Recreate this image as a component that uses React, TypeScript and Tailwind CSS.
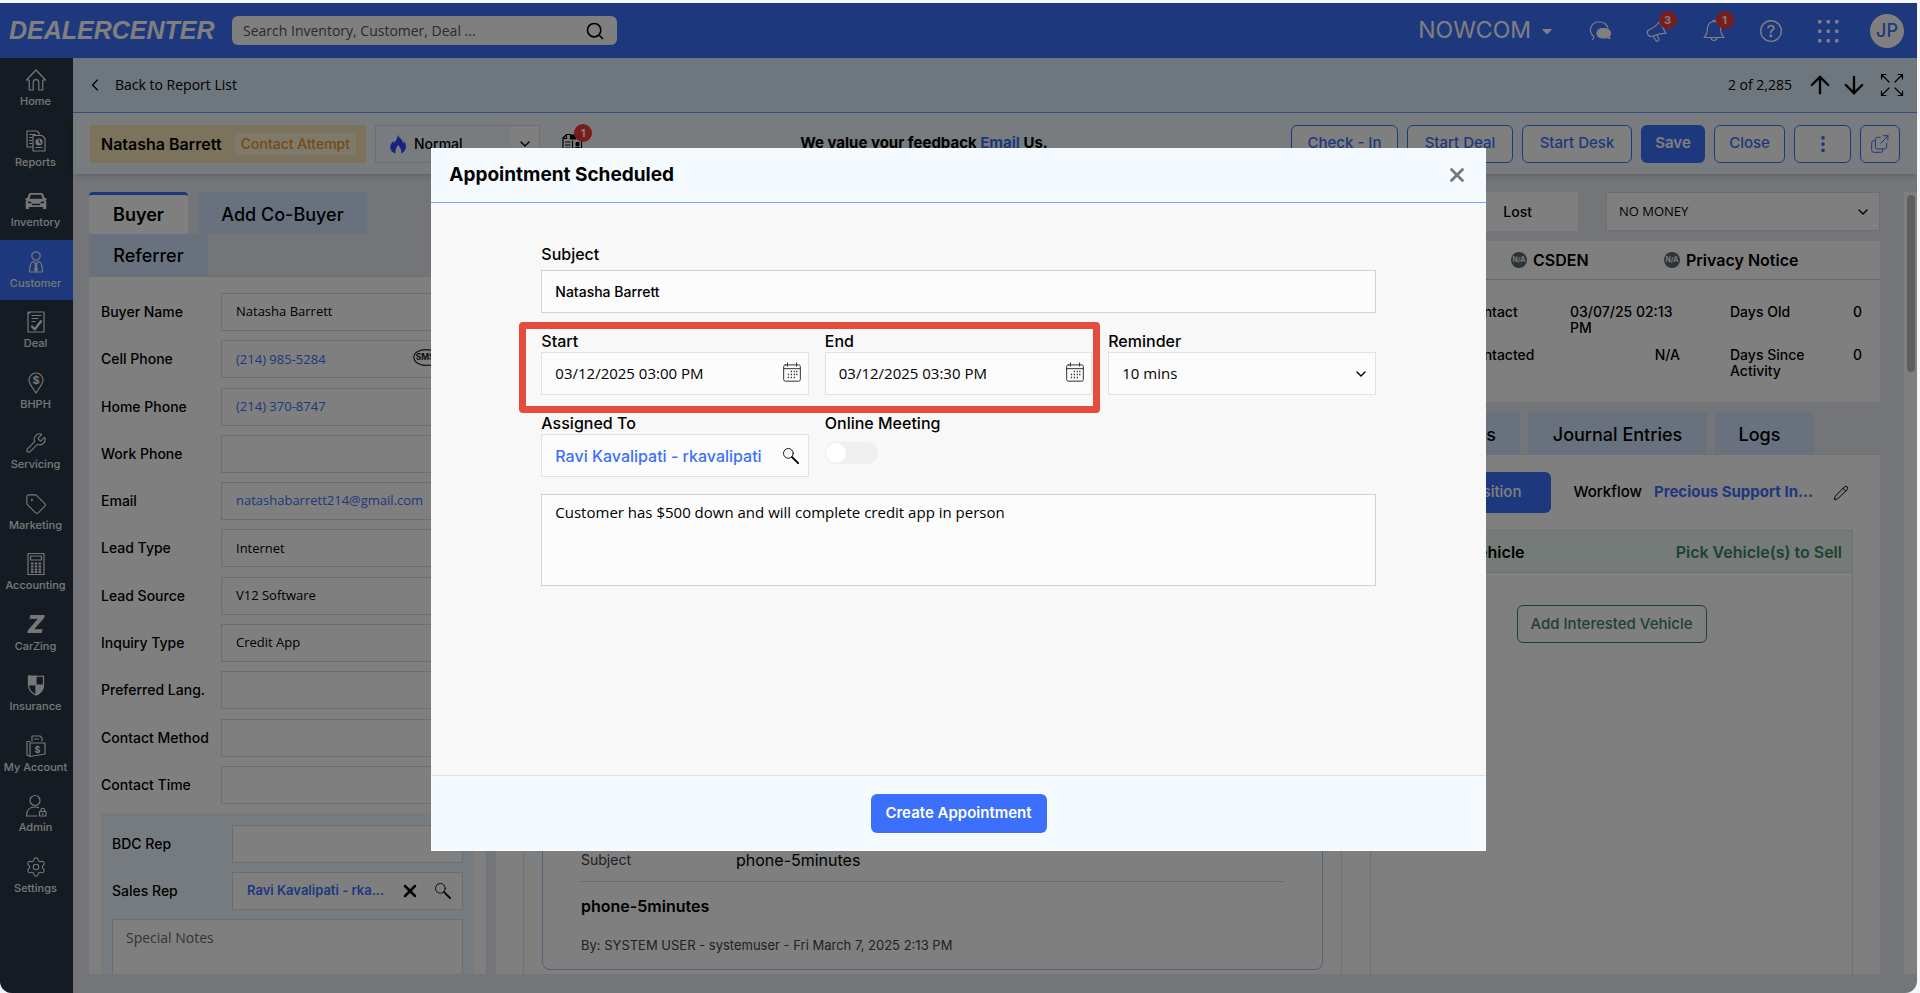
import { ReactNode } from 'react';
import { ArrowDown, ArrowUp, ChevronDown, ChevronLeft, Pencil, Search, Settings, Tag, Wrench, X } from 'lucide-react';
import { BsQuestionCircle, BsThreeDotsVertical } from 'react-icons/bs';
import { FaCaretDown } from 'react-icons/fa';

const Svg = ({ children, className = 'w-6 h-6' }: { children: ReactNode; className?: string }) => (
  <svg viewBox="0 0 24 24" fill="none" stroke="currentColor" strokeWidth="1.2" strokeLinejoin="round" strokeLinecap="round" className={className} aria-hidden="true">
    {children}
  </svg>
);

const HomeIcon = () => (
  <Svg><path d="M2.500 12 12 2l9.500 10H18.800v10h-4v-7.500a2.800 2.800 0 0 0-5.600 0V22h-4V12z" /></Svg>
);

const ReportsIcon = () => (
  <Svg>
    <path d="M9 18H3V2h10l2 2v1.500M5.500 5.500h6M5.500 8.500h2.500M5.500 11.500h2.500M5.500 14.500h2.500" />
    <path d="M9 6.500h9l3 3V22H9zM12 18.500h6" />
    <circle cx="15" cy="13" r="3" fill="currentColor" />
    <path d="M15 10.500V13l1.500 1" stroke="#2a3646" />
  </Svg>
);

const CarIcon = () => (
  <Svg>
    <path fill="currentColor" stroke="none" fillRule="evenodd" d="M6.500 4h11c.8 0 1.300.4 1.600 1.100L20.600 9h1.900v1.700h-1.100c.6.600.9 1.300.9 2.100V20h-3.300v-2H5v2H1.700v-7.200c0-.8.300-1.500.9-2.100H1.500V9h1.900l1.500-3.900C5.200 4.400 5.700 4 6.500 4Zm.4 1.800L5.500 9.800h13l-1.400-4ZM4 12.200v1.800l3.500.500v-1.300Zm16 0-3.500 1v1.300l3.500-.5ZM8 14.800v1.400h8v-1.400Z" />
  </Svg>
);

const CustomerIcon = () => (
  <Svg>
    <circle cx="12" cy="6" r="4.200" />
    <path d="M9.500 11.500c-3 1-4 4.500-4 10.500h13c0-6-1-9.500-4-10.500L12 14z" />
    <path d="m12 13.500-1 1.500.6 1-1 4 1.400 1.500 1.400-1.500-1-4 .6-1z" fill="currentColor" />
  </Svg>
);

const DealIcon = () => (
  <Svg>
    <path d="M4 4V22h16V2H6.500zM6.500 2H4v2M8 5.500h9M8 8.500h6M8 11.500h3" />
    <path d="m8 16.500 2.800 2.800 6.200-8" strokeWidth="2.400" />
  </Svg>
);

const BhphIcon = () => (
  <Svg>
    <path d="M12 22c-3-5-7-9-7-13a7 7 0 0 1 14 0c0 4-4 8-7 13z" />
    <text x="12" y="13" textAnchor="middle" fontSize="11" fontWeight="700" fill="currentColor" stroke="none" fontFamily="Inter, sans-serif">$</text>
  </Svg>
);

const CalculatorIcon = () => (
  <Svg>
    <path d="M4 1.500h16v21H4zM6.500 4h11v4h-11z" />
    <path d="M7 11.500h2.500M10.800 11.500h2.500M14.600 11.500h2.500M7 14.500h2.500M10.800 14.500h2.500M14.600 14.500h2.500M7 17.500h2.500M10.800 17.500h2.500M14.600 17.500h2.500M7 20h2.500M10.800 20h2.500M14.600 20h2.500" strokeWidth="1.800" strokeLinecap="butt" />
  </Svg>
);

const CarZingIcon = () => (
  <span className="font-['Inter',sans-serif] text-2xl leading-6 font-black italic">Z</span>
);

const InsuranceIcon = () => (
  <Svg>
    <path d="M4.500 3c5 .5 10 .5 15 0v9c0 5-3 8-7.500 10-4.500-2-7.500-5-7.500-10z" />
    <path d="M4.500 3c2.500.3 5 .4 7.500.4V12H4.500zM12 12h7.500c0 5-3 8-7.500 10z" fill="currentColor" />
  </Svg>
);

const AccountIcon = () => (
  <Svg>
    <path d="M8 7V2h8l2 2v3M10.500 5h4M6 7.500H3V21l3 1.500M6 9h15v11L6 22.500z" />
    <text x="13.500" y="19" textAnchor="middle" fontSize="9" fontWeight="700" fill="currentColor" stroke="none" fontFamily="Inter, sans-serif">$</text>
  </Svg>
);

const AdminIcon = () => (
  <Svg>
    <circle cx="11" cy="6.500" r="5" />
    <path d="M13 22H2.500c0-6 3-9 8.500-9 1.500 0 2.500.2 3.500.6" />
    <path d="M15.500 17.500H22V22h-6.500zM17 17.500V16a1.700 1.700 0 0 1 3.500 0v1.500M18.700 19.300v1" />
  </Svg>
);

const ChatIcon = () => (
  <Svg>
    <path d="M4.500 20.500c1.300-1 1.500-2 1-3.300A8 8 0 0 1 11 3a9 9 0 0 1 9 6" />
    <path d="M15.500 9.500c4 0 7 2 7 4.700 0 1.300-.5 2.300-1.500 3.100l1 2.200-3.200-1c-1 .4-2 .5-3.300.5-4 0-6.500-2-6.500-4.800s2.500-4.700 6.500-4.700z" fill="currentColor" />
  </Svg>
);

const MegaphoneIcon = () => (
  <Svg>
    <path d="M2.500 14.500c-.7-1.500 0-2.800 1.200-3.500C8 9 12 6.500 14.500 2.500l6.500 12c-4.500-.3-9 .8-13 2.500-2.500 1-4.700.2-5.500-2.500zM8 17l3 4.800c.8 1 3.500-.2 3-1.500l-2-4.300" />
  </Svg>
);

const BellIcon = () => (
  <Svg>
    <path d="M12 2.500a6.500 6.500 0 0 1 6.500 6.500c0 5.500 1.500 7.500 3.500 9.500H2c2-2 3.500-4 3.500-9.500A6.500 6.500 0 0 1 12 2.500zM9 18.500c0 4 6 4 6 0M10.500 2.500c0-2 3-2 3 0" />
  </Svg>
);

const GridIcon = () => (
  <svg viewBox="0 0 24 24" fill="currentColor" className="w-6 h-6" aria-hidden="true">
    {[2, 10.500, 19].map((x) => [1, 10.500, 20].map((y) => <rect key={`${x}-${y}`} x={x} y={y} width="3.500" height="3.500" rx="1" />))}
  </svg>
);

const ExpandIcon = () => (
  <Svg><path d="M9 9 1.500 1.500M1.500 6V1.500H6M15 9l7.500-7.500M18 1.500h4.500V6M9 15l-7.500 7.500M1.500 18v4.500H6M15 15l7.500 7.500M18 22.500h4.500V18" /></Svg>
);

const PopOutIcon = () => (
  <Svg className="w-5 h-5">
    <path d="M6 8H4.500A2.500 2.500 0 0 0 2 10.500v9A2.500 2.500 0 0 0 4.500 22H13a2.500 2.500 0 0 0 2.500-2.500V18" />
    <path d="M12.500 4H9a2.500 2.500 0 0 0-2.500 2.500v9A2.500 2.500 0 0 0 9 18h8.500a2.500 2.500 0 0 0 2.500-2.500V11M13 11l8.500-9M16 2h5.500v5.500" />
  </Svg>
);

const FlameIcon = () => (
  <svg viewBox="0 0 20 24" className="w-4 h-5" aria-hidden="true">
    <path fill="#3346ff" fillRule="evenodd" d="M10 0c.5 4 6 6 6.500 11 .8-.8 1-2 .8-3 2 3 3 6 2.400 9-.6 3-3 6-6.500 7 1.300-2 1.500-4-.2-6.500-1-1.500-2-2.500-1.900-4.500-3 2-5 6-4.100 11C3 22.500.3 20 .3 16c0-3.500 2-5.500 3.700-8 .5 1 .4 2 .2 3C7.500 8 9.500 5 10 0Z" />
  </svg>
);

const ClipboardIcon = () => (
  <Svg>
    <path d="M3 22V6l3.500-3.500H10M6.500 3v3.500H3M5.500 10H10M5.500 13H10M5.500 16H10M5.500 19H10M17 4h4.500v18H12.500V9" />
    <path d="M10.500 3h5v4h-5z" fill="currentColor" />
    <circle cx="17.500" cy="12" r="1.600" fill="currentColor" />
    <path d="M14.500 18c0-4 6-4 6 0z" fill="currentColor" />
  </Svg>
);

const SmsIcon = () => (
  <svg viewBox="0 0 30 24" fill="none" stroke="#222" strokeWidth="1.200" className="w-7 h-6 shrink-0" aria-hidden="true">
    <path d="M20 18.500c-9 1.500-18-2-18-8.500C2 5 7.500 2 15 2s13 3 13 8c0 3-2 5.500-5 7l2 4z" />
    <text x="14" y="13" textAnchor="middle" fontSize="9" fontWeight="700" fill="#222" stroke="none" fontFamily="Inter, sans-serif">SMS</text>
  </svg>
);

const LoupeIcon = () => (
  <Svg className="w-[18px] h-[18px]">
    <circle cx="8.500" cy="8.500" r="6.500" />
    <path d="m13.500 13.500 8 8" strokeWidth="2.600" />
  </Svg>
);

const CalendarIcon = () => (
  <Svg className="w-5 h-5">
    <path d="M4 3.500h16a2 2 0 0 1 2 2V21a2 2 0 0 1-2 2H4a2 2 0 0 1-2-2V5.500a2 2 0 0 1 2-2zM2 8h20M6.500 1v4M17.500 1v4" />
    <path d="M10.500 11.500h1.500M14 11.500h1.500M17 11.500h1.500M7 15h1.500M10.500 15h1.500M14 15h1.500M17 15h1.500M7 18.500h1.500M10.500 18.500h1.500M14 18.500h1.500" strokeWidth="1.800" strokeLinecap="butt" />
  </Svg>
);

const navItems = [
  { label: 'Home', icon: <HomeIcon /> },
  { label: 'Reports', icon: <ReportsIcon /> },
  { label: 'Inventory', icon: <CarIcon /> },
  { label: 'Customer', icon: <CustomerIcon />, active: true },
  { label: 'Deal', icon: <DealIcon /> },
  { label: 'BHPH', icon: <BhphIcon /> },
  { label: 'Servicing', icon: <Wrench className="w-[22px] h-[22px]" strokeWidth={1.2} /> },
  { label: 'Marketing', icon: <Tag className="w-[22px] h-[22px]" strokeWidth={1.2} /> },
  { label: 'Accounting', icon: <CalculatorIcon /> },
  { label: 'CarZing', icon: <CarZingIcon /> },
  { label: 'Insurance', icon: <InsuranceIcon /> },
  { label: 'My Account', icon: <AccountIcon /> },
  { label: 'Admin', icon: <AdminIcon /> },
  { label: 'Settings', icon: <Settings className="w-[22px] h-[22px]" strokeWidth={1.2} /> }
];

const buyerFields = [
  { id: 'buyer-name', label: 'Buyer Name', value: 'Natasha Barrett' },
  { id: 'cell-phone', label: 'Cell Phone', value: '(214) 985-5284', link: true, sms: true },
  { id: 'home-phone', label: 'Home Phone', value: '(214) 370-8747', link: true },
  { id: 'work-phone', label: 'Work Phone', value: '' },
  { id: 'email', label: 'Email', value: 'natashabarrett214@gmail.com', link: true },
  { id: 'lead-type', label: 'Lead Type', value: 'Internet' },
  { id: 'lead-source', label: 'Lead Source', value: 'V12 Software' },
  { id: 'inquiry-type', label: 'Inquiry Type', value: 'Credit App' },
  { id: 'preferred-lang', label: 'Preferred Lang.', value: '' },
  { id: 'contact-method', label: 'Contact Method', value: '' },
  { id: 'contact-time', label: 'Contact Time', value: '' }
];

const Badge = ({ children }: { children: ReactNode }) => (
  <span className="absolute -top-2 -right-2 w-[18px] h-[18px] rounded-full bg-[#f03a38] text-white text-[11px] leading-[18px] font-bold text-center">
    {children}
  </span>
);

const TopBar = () => (
  <header className="flex items-center h-[55px] shrink-0 pl-[9px] pr-[13px] bg-[#3c70fc] text-white">
    <a href="#" className="w-[223px] font-['Liberation_Sans',sans-serif] text-[25px] font-bold italic">DEALERCENTER</a>
    <div className="flex items-center w-[385px] h-[29px] pl-[11px] pr-3 rounded-md bg-white text-black">
      <input type="text" aria-label="Search" placeholder="Search Inventory, Customer, Deal ..." className="flex-1 text-sm font-['Open_Sans',sans-serif] placeholder:text-[#555] outline-none" />
      <button aria-label="Search"><Search className="w-5 h-5" /></button>
    </div>
    <div className="flex items-center ml-auto">
      <button className="flex items-center gap-2 mr-4 text-[23px] font-normal">
        NOWCOM <FaCaretDown className="w-4 h-4" />
      </button>
      <button aria-label="Chat" className="w-[57px] flex justify-center"><ChatIcon /></button>
      <button aria-label="Announcements" className="w-[57px] flex justify-center">
        <span className="relative"><MegaphoneIcon /><Badge>3</Badge></span>
      </button>
      <button aria-label="Notifications" className="w-[57px] flex justify-center">
        <span className="relative"><BellIcon /><Badge>1</Badge></span>
      </button>
      <button aria-label="Help" className="w-[57px] flex justify-center"><BsQuestionCircle className="w-[22px] h-[22px]" /></button>
      <button aria-label="Apps" className="w-[57px] flex justify-center"><GridIcon /></button>
      <button className="w-[34px] h-[34px] ml-[14px] rounded-full bg-white text-[#3c70fc] text-lg font-medium">JP</button>
    </div>
  </header>
);

const SideNav = () => (
  <nav className="w-[73px] shrink-0 bg-[#2a3646] text-[#eee]">
    <div className="flex flex-col h-[847px]">
      {navItems.map((item) => (
        <a key={item.label} href="#" className={`flex-1 flex flex-col items-center pt-[10px] pr-[2px] gap-px ${item.active ? 'bg-[#3c70fc]' : ''}`}>
          <span className="h-6 flex items-center">{item.icon}</span>
          <span className="text-[11px] leading-4 font-medium whitespace-nowrap">{item.label}</span>
        </a>
      ))}
    </div>
  </nav>
);

const outlineButton = 'h-[38px] rounded-md border border-[#3c70fc] bg-white text-[#3c70fc] text-[15px] font-medium flex items-center justify-center';

const CustomerBar = () => (
  <div className="flex items-center h-[61px] shrink-0 pl-[17px] pr-[17px] bg-[#f0f8fd] shadow-md z-10">
    <div className="flex items-center justify-between w-[276px] h-[38px] pl-[11px] pr-[10px] bg-[#f8e6ba]">
      <span className="text-base font-semibold">Natasha Barrett</span>
      <span className="px-[6px] rounded bg-[#fff3d6] text-[#e39a28] text-sm leading-[22px] font-medium">Contact Attempt</span>
    </div>
    <label className="flex items-center w-[165px] h-[38px] ml-[9px] pl-[14px] border border-[#d8dfe6]">
      <FlameIcon />
      <select aria-label="Priority" className="flex-1 self-stretch appearance-none pl-2 text-sm font-medium outline-none">
        <option>Normal</option>
      </select>
      <span className="flex items-center justify-center w-7 h-full bg-white"><ChevronDown className="w-4 h-4" /></span>
    </label>
    <button aria-label="Credit reports" className="relative ml-[20px]">
      <ClipboardIcon /><Badge>1</Badge>
    </button>
    <p className="flex-1 pr-[27px] text-center text-[15px] font-bold">
      We value your feedback <a href="#" className="text-[#3c70fc] underline">Email</a> Us.
    </p>
    <div className="flex gap-[9px]">
      <button className={`${outlineButton} w-[107px]`}>Check - In</button>
      <button className={`${outlineButton} w-[106px]`}>Start Deal</button>
      <button className={`${outlineButton} w-[110px]`}>Start Desk</button>
      <button className="w-16 h-[38px] rounded-md bg-[#3c70fc] text-white text-[15px] font-semibold">Save</button>
      <button className={`${outlineButton} w-[71px]`}>Close</button>
      <button aria-label="More" className={`${outlineButton} w-[57px]`}><BsThreeDotsVertical className="w-5 h-5" /></button>
      <button aria-label="Open in new window" className={`${outlineButton} w-10`}><PopOutIcon /></button>
    </div>
  </div>
);

const BuyerPanel = () => (
  <section className="flex flex-col w-[397px] shrink-0 overflow-hidden">
    <div className="flex gap-[10px] h-[42px] shrink-0 text-lg font-medium">
      <button className="w-[99px] rounded-t border-t-[3px] border-[#3c70fc] bg-white font-semibold">Buyer</button>
      <button className="w-[169px] pt-1 rounded-t bg-[#d3e3fc]">Add Co-Buyer</button>
    </div>
    <button className="w-[119px] h-[42px] shrink-0 pt-[2px] rounded-t bg-[#d3e3fc] text-lg font-medium">Referrer</button>
    <div className="bg-white border-t border-[#dde0e6] pt-4 pl-3 pr-3">
      <div className="flex flex-col justify-between h-[511px]">
        {buyerFields.map((field) => (
          <div key={field.id} className="flex items-center">
            <label htmlFor={field.id} className="w-[120px] text-sm font-medium">{field.label}</label>
            <div className="flex items-center flex-1 h-[38px] pl-[14px] border border-[#dcdcdc]">
              <input
                id={field.id}
                type="text"
                readOnly
                defaultValue={field.value}
                className={`bg-transparent text-[13px] font-['Open_Sans',sans-serif] outline-none ${field.sms ? 'w-[176px]' : 'w-[220px]'} ${field.link ? 'text-[#3c70fc]' : ''}`}
              />
              {field.sms && <SmsIcon />}
            </div>
          </div>
        ))}
      </div>
      <div className="mt-[9px] pt-3 px-[11px] bg-[#edf7fe]">
        <div className="flex items-center">
          <label htmlFor="bdc-rep" className="w-[120px] text-sm font-medium">BDC Rep</label>
          <input id="bdc-rep" type="text" className="w-0 flex-1 h-[38px] border border-[#d5dce3] bg-white px-3" />
        </div>
        <div className="flex items-center mt-[9px]">
          <label htmlFor="sales-rep" className="w-[120px] text-sm font-medium">Sales Rep</label>
          <div className="flex items-center flex-1 h-[38px] pl-[14px] pr-[10px] border border-[#d5dce3] bg-white">
            <input id="sales-rep" type="text" readOnly defaultValue="Ravi Kavalipati - rka..." className="w-0 flex-1 text-[13px] font-semibold text-[#3c70fc] outline-none" />
            <button aria-label="Clear" className="mr-[14px]"><X className="w-5 h-5" strokeWidth={3} /></button>
            <button aria-label="Find"><LoupeIcon /></button>
          </div>
        </div>
        <textarea aria-label="Special Notes" placeholder="Special Notes" className="block w-full h-[80px] mt-[9px] px-[13px] py-2 resize-none border border-[#d5dce3] bg-white text-sm font-['Open_Sans',sans-serif] placeholder:text-[#6a6a6a]" />
      </div>
    </div>
  </section>
);

const Notice = ({ children }: { children: ReactNode }) => (
  <span className="flex items-center gap-[6px] w-[153px] text-base font-semibold whitespace-nowrap">
    <span className="w-4 h-4 rounded-full bg-[#5b6870] text-white text-[7px] leading-4 font-semibold text-center">N/A</span>
    {children}
  </span>
);

const DealPanel = () => (
  <section className="flex flex-col flex-1 overflow-hidden">
    <div className="flex justify-end gap-7 shrink-0">
      <button className="w-[154px] h-[39px] pr-[46px] bg-white text-sm font-medium text-right">Lost</button>
      <label className="flex items-center w-[274px] h-[39px] pl-3 pr-2 border border-[#dcdcdc] bg-white">
        <select aria-label="Lost reason" className="flex-1 self-stretch appearance-none text-[13px] font-['Open_Sans',sans-serif] outline-none">
          <option>NO MONEY</option>
        </select>
        <ChevronDown className="w-4 h-4" />
      </label>
    </div>
    <div className="mt-[10px] h-[161px] shrink-0 bg-white">
      <div className="flex items-center justify-end h-[39px] pr-[63px] border-b border-[#d0d0d0]">
        <Notice>CSDEN</Notice>
        <Notice>Privacy Notice</Notice>
      </div>
      <dl className="grid grid-cols-[137px_110px_150px_32px] justify-end gap-y-[11px] pt-[24px] pr-[18px] text-[14px] leading-4 font-medium">
        <dt className="w-[100px]">Last Contact Attempt</dt>
        <dd>03/07/25 02:13 PM</dd>
        <dt className="ml-[50px]">Days Old</dt>
        <dd className="text-right">0</dd>
        <dt>Last Contacted</dt>
        <dd className="text-right">N/A</dd>
        <dt className="ml-[50px]">Days Since Activity</dt>
        <dd className="text-right">0</dd>
      </dl>
    </div>
    <div className="flex justify-end gap-2 mt-[10px] h-[42px] pr-[66px] shrink-0 text-lg font-medium">
      <button className="w-[110px] pt-1 rounded-t bg-[#d3e3fc] pr-6 text-right">Notes</button>
      <button className="w-[179px] pt-1 rounded-t bg-[#d3e3fc]">Journal Entries</button>
      <button className="w-[99px] pt-1 rounded-t bg-[#d3e3fc] pr-[10px]">Logs</button>
    </div>
    <div className="flex flex-col flex-1 min-h-0 border-t border-[#dde0e6] bg-white pl-[27px] pr-[27px]">
      <div className="flex items-center justify-end h-[75px] shrink-0 text-[15px]">
        <button className="w-[140px] h-[41px] mr-[22px] pr-[30px] rounded-md bg-[#3c70fc] text-white font-medium text-right">Disposition</button>
        <span className="font-medium">Workflow</span>
        <a href="#" className="ml-3 font-bold text-[#3c70fc]">Precious Support In...</a>
        <button aria-label="Edit workflow" className="ml-5 mr-1"><Pencil className="w-4 h-4" strokeWidth={1.5} /></button>
      </div>
      <div className="flex flex-1 min-h-0 gap-7">
        <div className="flex flex-col justify-end flex-1 px-[18px] pb-1 border-x border-[#e2e2e2]">
          <article className="px-[38px] pb-[14px] pt-6 rounded-b-lg border border-t-0 border-[#a9c8ea]">
            <div className="flex items-center h-10 border-b border-[#d0d0d0] pb-1">
              <span className="w-[155px] text-sm text-[#444]">Subject</span>
              <span className="text-base">phone-5minutes</span>
            </div>
            <h3 className="mt-[12px] text-base font-semibold">phone-5minutes</h3>
            <p className="mt-[17px] text-[13px] leading-5 text-[#444]">By: SYSTEM USER - systemuser - Fri March 7, 2025 2:13 PM</p>
          </article>
        </div>
        <div className="w-[483px] border border-b-0 border-[#d9e4de]">
          <div className="flex items-center justify-between h-[42px] pl-[14px] pr-[10px] border-b border-[#d9e4de] bg-[#ebf6f3] text-base font-semibold">
            <h3>Interested Vehicle</h3>
            <a href="#" className="text-[#3d8567]">Pick Vehicle(s) to Sell</a>
          </div>
          <button className="block w-[190px] h-[38px] mt-8 mx-auto rounded-md border border-[#3d8567] text-[15px] font-medium text-[#3d8567]">Add Interested Vehicle</button>
        </div>
      </div>
    </div>
  </section>
);

const modalLabel = 'block text-base leading-[22px] font-medium';
const modalField = 'flex items-center h-[43px] border border-[#e2e2e2] bg-[#fcfcfc]';

const DateField = ({ id, label, value }: { id: string; label: string; value: string }) => (
  <div>
    <label htmlFor={id} className={modalLabel}>{label}</label>
    <div className={modalField}>
      <input id={id} type="text" defaultValue={value} className="w-0 flex-1 pl-[13px] text-[15px] font-['Open_Sans',sans-serif] outline-none" />
      <button type="button" aria-label={`Pick ${label.toLowerCase()} date`} className="w-8 h-full flex items-center justify-center pb-1 text-[#333]"><CalendarIcon /></button>
    </div>
  </div>
);

const AppointmentModal = () => (
  <div className="absolute inset-0 z-20 flex items-start justify-center pt-[145px] bg-black/50">
    <div role="dialog" aria-labelledby="modal-title" className="flex flex-col w-[55%] h-[703px] bg-[#f8f8f8]">
      <div className="flex items-center justify-between h-[55px] px-[18px] border-b border-[#7aa5fb] bg-[#f5faff]">
        <h2 id="modal-title" className="text-[19px] font-bold">Appointment Scheduled</h2>
        <button aria-label="Close" className="text-[#777]"><X className="w-[22px] h-[22px]" strokeWidth={3} /></button>
      </div>
      <form className="flex-1 px-[110px] pt-10">
        <label htmlFor="subject" className={`${modalLabel} mb-[5px]`}>Subject</label>
        <input id="subject" type="text" defaultValue="Natasha Barrett" className="block w-full h-[43px] px-[13px] border border-[#d2d2d2] bg-[#fcfcfc] text-[14px] font-medium outline-none" />
        <div className="grid grid-cols-3 gap-x-4 gap-y-[17px] mt-[17px]">
          <div className="relative col-span-2 grid grid-cols-2 gap-4">
            <DateField id="start" label="Start" value="03/12/2025 03:00 PM" />
            <DateField id="end" label="End" value="03/12/2025 03:30 PM" />
            <div className="absolute -top-2 -bottom-[18px] -left-[22px] -right-2 rounded border-[7px] border-[#e64c3c] pointer-events-none" />
          </div>
          <div>
            <label htmlFor="reminder" className={modalLabel}>Reminder</label>
            <div className={modalField}>
              <select id="reminder" className="flex-1 self-stretch appearance-none pl-[13px] text-[15px] font-['Open_Sans',sans-serif] outline-none">
                <option>10 mins</option>
              </select>
              <ChevronDown className="w-4 h-4 mr-[6px]" />
            </div>
          </div>
          <div>
            <label htmlFor="assigned-to" className={modalLabel}>Assigned To</label>
            <div className={modalField}>
              <input id="assigned-to" type="text" defaultValue="Ravi Kavalipati - rkavalipati" className="w-0 flex-1 pl-[13px] text-base font-medium text-[#3c70fc] outline-none" />
              <button type="button" aria-label="Find user" className="mr-2"><LoupeIcon /></button>
            </div>
          </div>
          <div>
            <label htmlFor="online-meeting" className={modalLabel}>Online Meeting</label>
            <input id="online-meeting" type="checkbox" role="switch" className="block w-[53px] h-[22px] mt-2 appearance-none rounded-full bg-[#efefef] before:block before:w-[20px] before:h-[20px] before:m-px before:rounded-full before:bg-white" />
          </div>
        </div>
        <textarea aria-label="Notes" defaultValue="Customer has $500 down and will complete credit app in person" className="block w-full h-[92px] mt-[17px] px-[13px] py-[6px] resize-none border border-[#d2d2d2] bg-[#fcfcfc] text-[15px] font-['Open_Sans',sans-serif] outline-none" />
      </form>
      <div className="flex items-center justify-center h-[76px] border-t border-[#dfe5ea] bg-[#f5faff]">
        <button className="w-44 h-[39px] rounded-md bg-[#3c70fc] text-white text-[15px] font-semibold">Create Appointment</button>
      </div>
    </div>
  </div>
);

const App = () => {
  return (
    <div className="h-screen pt-[3px] pr-[3px] bg-[#f4f6f8] font-['Inter',sans-serif] text-black">
      <div className="relative flex flex-col h-full overflow-hidden rounded-b-xl bg-[#e8eaf1]">
        <TopBar />
        <div className="flex flex-1 min-h-0">
          <SideNav />
          <div className="flex flex-col flex-1 min-w-0">
            <div className="flex items-center h-[55px] shrink-0 pl-3 pr-[13px] border-b border-[#6f9bff] bg-[#deeefc] font-['Open_Sans',sans-serif] text-sm">
              <a href="#" className="flex items-center gap-[10px]"><ChevronLeft className="w-5 h-5" strokeWidth={1.5} /> Back to Report List</a>
              <span className="ml-auto mr-[14px]">2 of 2,285</span>
              <button aria-label="Previous" className="mr-[6px]"><ArrowUp className="w-7 h-7" strokeWidth={2} /></button>
              <button aria-label="Next" className="mr-3"><ArrowDown className="w-7 h-7" strokeWidth={2} /></button>
              <button aria-label="Full screen"><ExpandIcon /></button>
            </div>
            <CustomerBar />
            <main className="flex flex-1 min-h-0 pt-[18px] pb-[19px] pl-4">
              <BuyerPanel />
              <div className="w-[10px] shrink-0" />
              <DealPanel />
              <div className="w-[13px] ml-6 pt-[3px] bg-white">
                <div className="w-2 h-[177px] mx-auto rounded-full bg-[#bdbdbd]" />
              </div>
            </main>
          </div>
        </div>
        <AppointmentModal />
      </div>
    </div>
  );
};

export default App;
